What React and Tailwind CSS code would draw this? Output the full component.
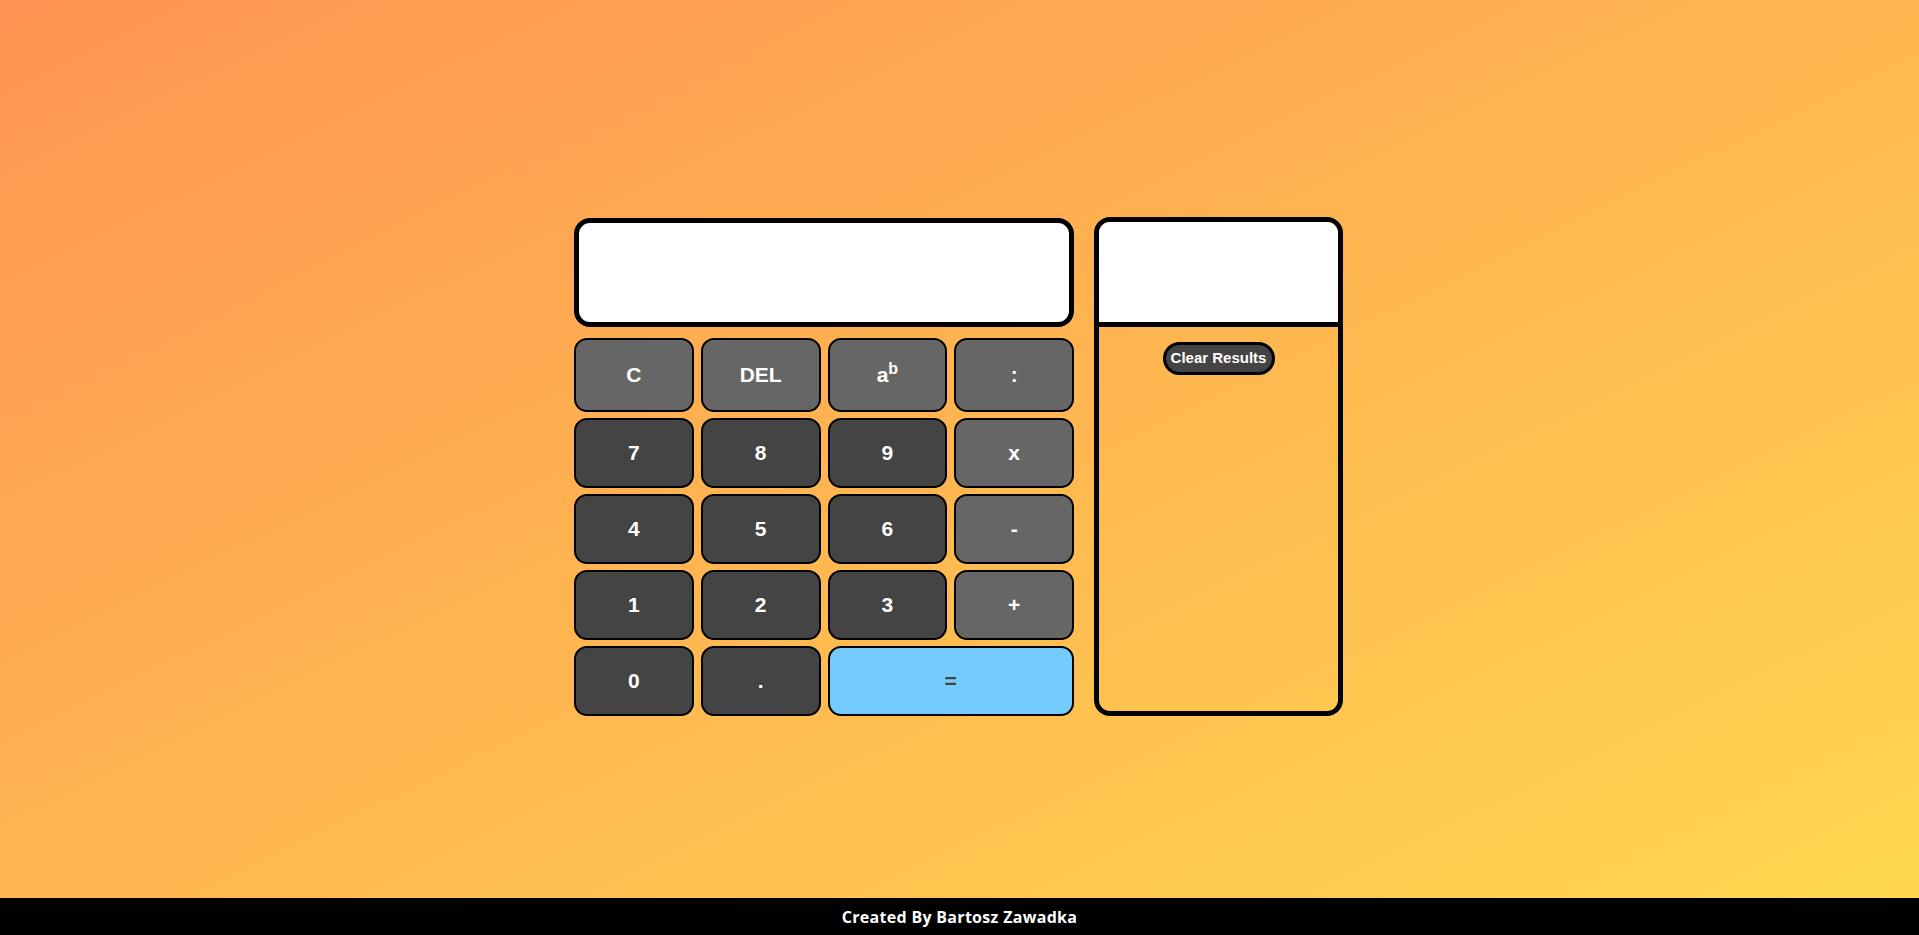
import React from "react";

const opBtn = "bg-[#666666]";
const numBtn = "bg-[#444444]";

function Key({ children, className = "" }) {
    return (
        <button
            className={`flex items-center justify-center rounded-[13px] border-2 border-black text-[21px] font-bold text-white ${className}`}
        >
            {children}
        </button>
    );
}

export default function App() {
    return (
        <div className="min-h-screen w-full bg-[linear-gradient(to_bottom_right,#ff9452,#ffd94f)] font-['Liberation_Sans',Arial,sans-serif]">
            <main className="flex h-screen items-center justify-center gap-[20px] pr-[2px] pb-[2px]">
                <div className="w-[500px]">
                    <div className="h-[109px] rounded-[16px] border-[5px] border-black bg-white"></div>
                    <div className="mt-[11px] grid grid-cols-4 grid-rows-[74px_70px_70px_70px_70px] gap-x-[7px] gap-y-[6px]">
                        <Key className={opBtn}>C</Key>
                        <Key className={opBtn}>DEL</Key>
                        <Key className={opBtn}>
                            <span>
                                a<sup className="text-[16px]">b</sup>
                            </span>
                        </Key>
                        <Key className={opBtn}>:</Key>

                        <Key className={numBtn}>7</Key>
                        <Key className={numBtn}>8</Key>
                        <Key className={numBtn}>9</Key>
                        <Key className={opBtn}>x</Key>

                        <Key className={numBtn}>4</Key>
                        <Key className={numBtn}>5</Key>
                        <Key className={numBtn}>6</Key>
                        <Key className={opBtn}>-</Key>

                        <Key className={numBtn}>1</Key>
                        <Key className={numBtn}>2</Key>
                        <Key className={numBtn}>3</Key>
                        <Key className={opBtn}>+</Key>

                        <Key className={numBtn}>0</Key>
                        <Key className={numBtn}>.</Key>
                        <Key className="col-span-2 bg-[#75cbfe] !text-[#444444]">=</Key>
                    </div>
                </div>

                <div className="flex h-[499px] w-[249px] flex-col rounded-[16px] border-[5px] border-black">
                    <div className="h-[105px] shrink-0 rounded-t-[11px] border-b-[5px] border-black bg-white"></div>
                    <div className="flex justify-center pt-[15px]">
                        <button className="h-[33px] w-[112px] rounded-full border-[3px] border-black bg-[#444444] text-[15px] font-bold text-white">
                            Clear Results
                        </button>
                    </div>
                </div>
            </main>

            <footer className="fixed bottom-0 left-0 flex h-[37px] w-full items-center justify-center bg-black">
                <p className="font-['Open_Sans',sans-serif] text-[16px] font-bold tracking-[0.3px] text-white">
                    Created By Bartosz Zawadka
                </p>
            </footer>
        </div>
    );
}
